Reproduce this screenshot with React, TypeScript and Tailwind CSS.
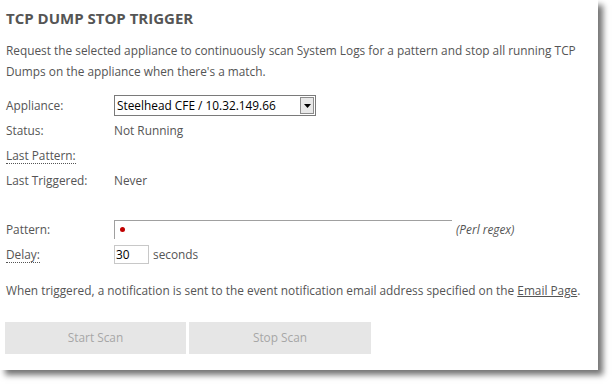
const Row = ({ label, dotted, children }: { label: string; dotted?: boolean; children?: React.ReactNode }) => (
  <div className="flex items-center h-[25px]">
    <div className="w-[108px] shrink-0">
      <span className={dotted ? "border-b border-dotted border-[#555]" : ""}>{label}</span>
    </div>
    <div className="flex items-center">{children}</div>
  </div>
);

const App = () => {
  return (
    <div className="w-[614px] h-[386px] bg-white font-['Open_Sans',sans-serif] text-[11.85px] text-[#555]">
      <div className="w-[598px] h-[370px] bg-white shadow-[5px_5px_6px_rgba(0,0,0,0.55)] px-[6px] pt-[8px]">
        <h1 className="text-[15px] font-bold leading-[21px] text-[#555]">TCP DUMP STOP TRIGGER</h1>
        <p className="mt-[11px] leading-[21px]">
          Request the selected appliance to continuously scan System Logs for a pattern and stop all running TCP
          Dumps on the appliance when there's a match.
        </p>
        <div className="mt-[11px]">
          <Row label="Appliance:">
            <div className="flex items-center w-[202px] h-[21px] border border-[#7a7a7a] bg-white text-black pl-[2px]">
              <span className="flex-1">Steelhead CFE / 10.32.149.66</span>
              <div className="w-[14px] h-[17px] mr-[1px] border border-[#8c8c8c] bg-[#e8e8e8] flex items-center justify-center">
                <svg width="7" height="4" viewBox="0 0 7 4"><path d="M0 0h7L3.5 4z" fill="#000" /></svg>
              </div>
            </div>
          </Row>
          <Row label="Status:">Not Running</Row>
          <Row label="Last Pattern:" dotted />
          <Row label="Last Triggered:">Never</Row>
        </div>
        <div className="mt-[24px]">
          <Row label="Pattern:">
            <div className="relative w-[338px] h-[19px] border-l border-t border-[#a0a0a0] bg-white">
              <span className="absolute left-[5px] top-[6px] w-[5px] h-[5px] rounded-full bg-[#c00000]" />
            </div>
            <span className="ml-[4px] italic">(Perl regex)</span>
          </Row>
          <Row label="Delay:" dotted>
            <div className="w-[35px] h-[19px] border border-[#c8c8c8] text-black pl-[1px] leading-[17px]">30</div>
            <span className="ml-[4px]">seconds</span>
          </Row>
        </div>
        <p className="mt-[13px] leading-[21px]">
          When triggered, a notification is sent to the event notification email address specified on the{" "}
          <span className="underline">Email Page</span>.
        </p>
        <div className="mt-[21px] flex gap-[3px] -ml-[1px]">
          <button className="w-[181px] h-[32px] bg-[#e6e6e6] text-[#a6a6a6]">Start Scan</button>
          <button className="w-[182px] h-[32px] bg-[#e6e6e6] text-[#a6a6a6]">Stop Scan</button>
        </div>
      </div>
    </div>
  );
};

export default App;
